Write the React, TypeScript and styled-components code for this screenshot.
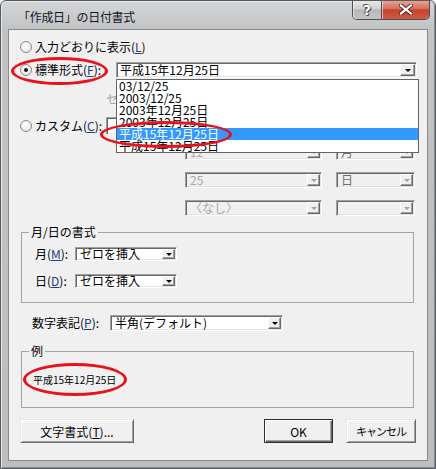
import React from 'react';
import styled, { createGlobalStyle } from 'styled-components';

const Global = createGlobalStyle`
  html, body { margin: 0; padding: 0; background: #ffffff; }
  body { font-family: "Noto Sans CJK JP", "Noto Sans", sans-serif; font-size: 12px; color: #000; }
  * { box-sizing: border-box; }
`;

const Window = styled.div`
  position: relative;
  width: 436px;
  height: 469px;
  display: flex;
  flex-direction: column;
  border: 1px solid #555a60;
  border-radius: 6px 6px 0 0;
  background: linear-gradient(to bottom, #d4d5d7 0px, #c2c3c5 28px, #bcbdbf 100%);
  box-shadow: inset 1px 1px 0 #e9e9e9, inset -1px -1px 0 #8d8d8d;
  overflow: hidden;
`;

const TitleBar = styled.div`
  height: 28px;
  flex: none;
  display: flex;
  align-items: flex-start;
  padding-left: 17px;
`;

const Title = styled.div`
  margin-top: 8px;
  font-size: 12px;
  line-height: 15px;
  letter-spacing: -0.3px;
  color: #10141c;
`;

const CaptionButtons = styled.div`
  margin-left: auto;
  margin-right: 5px;
  margin-top: -1px;
  display: flex;
  height: 20px;
  border: 1px solid #4b4f55;
  border-top: none;
  border-radius: 0 0 5px 5px;
  overflow: hidden;
`;

const CaptionButton = styled.div<{ $close?: boolean }>`
  width: ${p => (p.$close ? 48 : 28)}px;
  display: flex;
  align-items: center;
  justify-content: center;
  border-left: ${p => (p.$close ? '1px solid #4b4f55' : 'none')};
  background: ${p =>
    p.$close
      ? 'linear-gradient(to bottom, #e9a99b 0%, #d6705d 45%, #c4432c 52%, #cf5a44 100%)'
      : 'linear-gradient(to bottom, #eaeaea 0%, #d2d2d2 45%, #b7b7b7 52%, #c4c4c4 100%)'};
  box-shadow: inset 1px 1px 0 rgba(255, 255, 255, 0.55);
  color: #fff;
  font-family: "DejaVu Sans", sans-serif;
  font-weight: bold;
  font-size: 14px;
  text-shadow: 0 0 1px #303030, 1px 1px 0 #505050, -1px -1px 0 #606060;
`;

const Client = styled.div`
  flex: 1;
  margin: 0 7px 7px 7px;
  background: #f0f0f0;
  border: 1px solid #8a8a8a;
  display: flex;
  flex-direction: column;
`;

const Row = styled.div<{ $mt: number; $pl: number; $h: number; $gap?: number }>`
  display: flex;
  align-items: center;
  margin-top: ${p => p.$mt}px;
  padding-left: ${p => p.$pl}px;
  height: ${p => p.$h}px;
  gap: ${p => p.$gap ?? 0}px;
`;

const RadioLabel = styled.label<{ $w?: number }>`
  display: flex;
  align-items: center;
  gap: 3px;
  width: ${p => (p.$w ? `${p.$w}px` : 'auto')};
  flex: none;
  line-height: 16px;
  white-space: nowrap;
`;

const Radio = styled.span<{ $checked?: boolean }>`
  flex: none;
  width: 12px;
  height: 12px;
  border-radius: 50%;
  border: 1px solid #8b8b8b;
  background: radial-gradient(circle at 45% 40%, #ffffff 0%, #f2f2f2 45%, #d6d6d6 100%);
  display: inline-flex;
  align-items: center;
  justify-content: center;
  &::after {
    content: '';
    width: 4px;
    height: 4px;
    border-radius: 50%;
    background: ${p => (p.$checked ? '#161616' : 'transparent')};
  }
`;

const Key = styled.u`
  color: #1e3a86;
`;

const Muted = styled.span`
  color: #a8a8a8;
  line-height: 16px;
  white-space: nowrap;
`;

const ComboFrame = styled.div<{ $w: number; $h: number; $disabled?: boolean }>`
  position: relative;
  flex: none;
  width: ${p => p.$w}px;
  height: ${p => p.$h}px;
  display: flex;
  align-items: stretch;
  padding: 1px;
  background: ${p => (p.$disabled ? '#f0f0f0' : '#ffffff')};
  border: 1px solid;
  border-color: #a0a0a0 #ffffff #ffffff #a0a0a0;
  box-shadow: inset 1px 1px 0 #696969, inset -1px -1px 0 #e3e3e3;
`;

const ComboText = styled.div<{ $color?: string; $pl?: number }>`
  flex: 1;
  min-width: 0;
  display: flex;
  align-items: center;
  padding-left: ${p => p.$pl ?? 3}px;
  color: ${p => p.$color ?? '#000'};
  white-space: nowrap;
  line-height: 1;
  font-size: 12px;
`;

const ArrowButton = styled.div<{ $w: number; $disabled?: boolean }>`
  flex: none;
  width: ${p => p.$w}px;
  background: #f0f0f0;
  border: 1px solid;
  border-color: #ffffff #696969 #696969 #ffffff;
  box-shadow: inset -1px -1px 0 #a0a0a0;
  display: flex;
  align-items: center;
  justify-content: center;
  &::after {
    content: '';
    width: 0;
    height: 0;
    border-left: 3px solid transparent;
    border-right: 3px solid transparent;
    border-top: 3px solid ${p => (p.$disabled ? '#a0a0a0' : '#000')};
    margin-top: 1px;
  }
`;

const DropList = styled.ul`
  position: absolute;
  z-index: 2;
  left: -1px;
  top: calc(100% + 2px);
  width: 303px;
  height: 74px;
  margin: 0;
  padding: 0;
  list-style: none;
  background: #ffffff;
  border: 1px solid #646464;
  overflow: hidden;
`;

const DropItem = styled.li<{ $selected?: boolean }>`
  height: 12px;
  display: flex;
  align-items: center;
  line-height: 1;
  padding-left: 2px;
  font-size: 12px;
  white-space: nowrap;
  background: ${p => (p.$selected ? '#3399ff' : 'transparent')};
  color: ${p => (p.$selected ? '#ffffff' : '#000')};
`;

const Group = styled.div<{ $mt: number; $h: number; $pt: number; $pl: number }>`
  position: relative;
  margin: ${p => p.$mt}px 0 0 12px;
  width: 393px;
  height: ${p => p.$h}px;
  border: 1px solid #a3a3a3;
  padding: ${p => p.$pt}px 0 0 ${p => p.$pl}px;
  display: flex;
  flex-direction: column;
`;

const Legend = styled.span`
  position: absolute;
  top: -8px;
  left: 7px;
  padding: 0 2px;
  background: #f0f0f0;
  line-height: 14px;
  white-space: nowrap;
`;

const FieldLabel = styled.span<{ $w: number }>`
  width: ${p => p.$w}px;
  flex: none;
  white-space: nowrap;
  line-height: 14px;
`;

const SampleText = styled.span`
  font-size: 10px;
  line-height: 14px;
  white-space: nowrap;
`;

const ButtonRow = styled.div`
  margin-top: 11px;
  padding: 0 11px;
  height: 24px;
  display: flex;
  justify-content: space-between;
`;

const RightButtons = styled.div`
  display: flex;
  gap: 13px;
`;

const Button = styled.button<{ $w: number; $default?: boolean; $tight?: boolean }>`
  width: ${p => p.$w}px;
  height: 24px;
  padding: 0;
  margin: 0;
  background: #f0f0f0;
  font-family: "Noto Sans CJK JP", "Noto Sans", sans-serif;
  font-size: ${p => (p.$tight ? 11 : 12)}px;
  letter-spacing: ${p => (p.$tight ? '-1px' : '0')};
  color: #000;
  border: 1px solid;
  border-color: ${p => (p.$default ? '#2e2e2e' : '#e8e8e8 #696969 #696969 #e8e8e8')};
  box-shadow: ${p =>
    p.$default
      ? 'inset 1px 1px 0 #ffffff, inset -1px -1px 0 #696969, inset -2px -2px 0 #a0a0a0'
      : 'inset 1px 1px 0 #ffffff, inset -1px -1px 0 #a0a0a0'};
`;

const Ellipse = styled.div`
  position: absolute;
  z-index: 5;
  border: 3px solid #e8121c;
  border-radius: 50%;
  pointer-events: none;
`;

type ComboProps = {
  w: number;
  h: number;
  text?: string;
  disabled?: boolean;
  color?: string;
  arrowW?: number;
  pl?: number;
  children?: React.ReactNode;
};

const Combo = ({ w, h, text, disabled, color, arrowW = 13, pl, children }: ComboProps) => (
  <ComboFrame $w={w} $h={h} $disabled={disabled}>
    <ComboText $color={color} $pl={pl}>{text}</ComboText>
    <ArrowButton $w={arrowW} $disabled={disabled} />
    {children}
  </ComboFrame>
);

const listItems = [
  '03/12/25',
  '2003/12/25',
  '2003年12月25日',
  '2003年12月25日',
  '平成15年12月25日',
  '平成15年12月25日',
];

export default function App() {
  return (
    <>
      <Global />
      <Window>
        <TitleBar>
          <Title>「作成日」の日付書式</Title>
          <CaptionButtons>
            <CaptionButton>?</CaptionButton>
            <CaptionButton $close>
              <svg width="14" height="11" viewBox="0 0 14 11">
                <path d="M2 1.5 L12 9.5 M12 1.5 L2 9.5" stroke="#4a2a25" strokeWidth="4" strokeLinecap="square" />
                <path d="M2 1.5 L12 9.5 M12 1.5 L2 9.5" stroke="#ffffff" strokeWidth="2.2" strokeLinecap="square" />
              </svg>
            </CaptionButton>
          </CaptionButtons>
        </TitleBar>

        <Client>
          <Row $mt={9} $pl={11} $h={16}>
            <RadioLabel>
              <Radio />
              <span>入力どおりに表示(<Key>L</Key>)</span>
            </RadioLabel>
          </Row>

          <Row $mt={7} $pl={11} $h={16}>
            <RadioLabel $w={96}>
              <Radio $checked />
              <span>標準形式(<Key>F</Key>):</span>
            </RadioLabel>
            <Combo w={301} h={16} text="平成15年12月25日" arrowW={15} pl={2}>
              <DropList>
                {listItems.map((t, i) => (
                  <DropItem key={i} $selected={i === 4}>{t}</DropItem>
                ))}
              </DropList>
            </Combo>
          </Row>

          <Row $mt={13} $pl={97} $h={16}>
            <Muted>セパレーター(S):</Muted>
          </Row>

          <Row $mt={10} $pl={11} $h={18}>
            <RadioLabel $w={86}>
              <Radio />
              <span>カスタム(<Key>C</Key>):</span>
            </RadioLabel>
            <ComboFrame $w={308} $h={18} />
          </Row>

          <Row $mt={9} $pl={176} $h={16} $gap={14}>
            <Combo w={137} h={16} text="12" disabled color="#a8a8a8" />
            <Combo w={79} h={16} text="月" disabled color="#6e6e6e" />
          </Row>
          <Row $mt={12} $pl={176} $h={16} $gap={14}>
            <Combo w={137} h={16} text="25" disabled color="#a8a8a8" />
            <Combo w={79} h={16} text="日" disabled color="#6e6e6e" />
          </Row>
          <Row $mt={12} $pl={176} $h={16} $gap={14}>
            <Combo w={137} h={16} text="〈なし〉" disabled color="#a8a8a8" />
            <Combo w={79} h={16} text="" disabled />
          </Row>

          <Group $mt={16} $h={71} $pt={14} $pl={13}>
            <Legend>月/日の書式</Legend>
            <Row $mt={0} $pl={0} $h={14}>
              <FieldLabel $w={40}>月(<Key>M</Key>):</FieldLabel>
              <Combo w={102} h={14} text="ゼロを挿入" />
            </Row>
            <Row $mt={13} $pl={0} $h={14}>
              <FieldLabel $w={40}>日(<Key>D</Key>):</FieldLabel>
              <Combo w={102} h={14} text="ゼロを挿入" />
            </Row>
          </Group>

          <Row $mt={12} $pl={23} $h={16}>
            <FieldLabel $w={78}>数字表記(<Key>P</Key>):</FieldLabel>
            <Combo w={173} h={16} text="半角(デフォルト)" />
          </Row>

          <Group $mt={20} $h={57} $pt={21} $pl={11}>
            <Legend>例</Legend>
            <SampleText>平成15年12月25日</SampleText>
          </Group>

          <ButtonRow>
            <Button $w={114}>文字書式(<u>T</u>)...</Button>
            <RightButtons>
              <Button $w={69} $default>OK</Button>
              <Button $w={70} $tight>キャンセル</Button>
            </RightButtons>
          </ButtonRow>
        </Client>

        <Ellipse style={{ left: 10, top: 56, width: 97, height: 28 }} />
        <Ellipse style={{ left: 99, top: 120, width: 132, height: 27 }} />
        <Ellipse style={{ left: 22, top: 362, width: 104, height: 33 }} />
      </Window>
    </>
  );
}
